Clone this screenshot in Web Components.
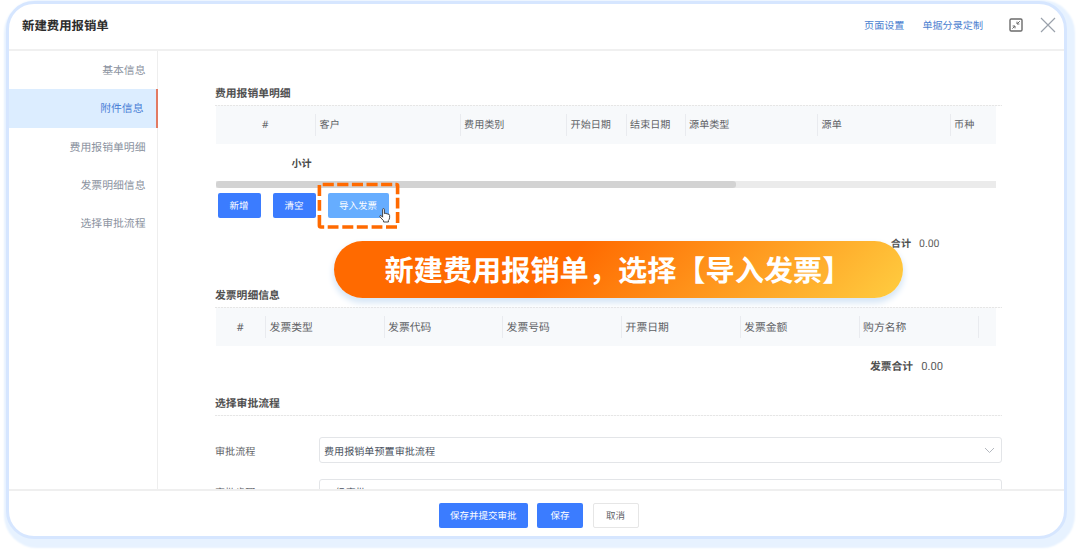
<!DOCTYPE html>
<html lang="zh-CN">
<head>
<meta charset="utf-8">
<title>新建费用报销单</title>
<style>
  html, body {
    margin: 0;
    height: 552px;
    overflow: hidden;
    background: #ffffff;
  }

  body {
    font-family: 'Noto Sans', 'Noto Sans CJK SC', sans-serif;
    text-rendering: geometricPrecision;
    position: relative;
  }
</style>
</head>
<body>

<mx-window label="新建费用报销单">
  <mx-link slot="tools">页面设置</mx-link>
  <mx-link slot="tools">单据分录定制</mx-link>
  <mx-icon slot="tools" name="shrink" style="margin: 0 0 0 8px"></mx-icon>
  <mx-icon slot="tools" name="close" style="margin: 0 0 0 -1px"></mx-icon>

  <mx-nav-item slot="nav">基本信息</mx-nav-item>
  <mx-nav-item slot="nav" selected>附件信息</mx-nav-item>
  <mx-nav-item slot="nav">费用报销单明细</mx-nav-item>
  <mx-nav-item slot="nav">发票明细信息</mx-nav-item>
  <mx-nav-item slot="nav">选择审批流程</mx-nav-item>

  <mx-section label="费用报销单明细" style="height: 202px">
    <mx-columns columns="#:99.5,客户:144.5,费用类别:106.5,开始日期:59.5,结束日期:59,源单类型:132.5,源单:132.5,币种:46"></mx-columns>
    <mx-subtotal>小计</mx-subtotal>
    <mx-scroll></mx-scroll>
    <mx-toolbar>
      <mx-button style="width: 43px">新增</mx-button>
      <mx-button style="width: 43px">清空</mx-button>
      <mx-button kind="hover" style="width: 61px">导入发票</mx-button>
    </mx-toolbar>
    <mx-total label="合计" style="margin: 16px 62.5px 0 0">0.00</mx-total>
  </mx-section>

  <mx-section label="发票明细信息" style="height: 108px">
    <mx-columns size="large" columns="#:49.5,发票类型:118.5,发票代码:118.5,发票号码:119,开票日期:118.5,发票金额:119,购方名称:119,:18"></mx-columns>
    <mx-total label="发票合计" size="large" style="margin: 11px 59px 0 0">0.00</mx-total>
  </mx-section>

  <mx-section label="选择审批流程">
    <mx-field label="审批流程" arrow style="margin-top: 21px">费用报销单预置审批流程</mx-field>
    <mx-field label="审批步骤" style="margin-top: 16px; line-height: 13px"><span style="padding-left: 1.5px">一级审批</span></mx-field>
  </mx-section>

  <mx-button slot="footer" style="width: 88.5px">保存并提交审批</mx-button>
  <mx-button slot="footer" style="width: 46px">保存</mx-button>
  <mx-button slot="footer" kind="plain" style="width: 46px">取消</mx-button>
</mx-window>

<mx-marker></mx-marker>
<mx-banner>新建费用报销单，选择【导入发票】</mx-banner>

<script>
function build( host, html ) {
  const template = document.createElement( 'template' );
  template.innerHTML = html;
  const shadowRoot = host.attachShadow( {mode: 'open'} );
  shadowRoot.appendChild( template.content.cloneNode( true ) );
  return shadowRoot;
}

class Window extends HTMLElement {
  constructor() {
    super();

    const root = build( this, `
      <style>
        :host {
          box-sizing: border-box;
          display: flex;
          flex-direction: column;
          position: absolute;
          left: 6px;
          top: 1px;
          width: 1061px;
          height: 538px;
          background: #ffffff;
          border: solid 3px #d6e6ff;
          border-radius: 28px;
          box-shadow: 3px 4px 2px 5px #e7f2ff;
          overflow: hidden;
        }

        header {
          align-items: center;
          border-bottom: solid 2px #f0f0f0;
          box-sizing: border-box;
          display: flex;
          flex: none;
          gap: 18px;
          height: 47px;
          padding: 0 8px 3px 13px;
        }

        h1 {
          color: #2b2b2b;
          flex: 1;
          font-size: 12.4px;
          font-weight: 700;
          line-height: 18px;
          margin: 0;
          padding-top: 2px;
        }

        .middle {
          display: flex;
          flex: 1;
          min-height: 0;
        }

        nav {
          border-right: solid 1px #eeeeee;
          box-sizing: border-box;
          flex: none;
          width: 149px;
        }

        main {
          box-sizing: border-box;
          flex: 1;
          overflow: hidden;
          padding: 34.5px 62px 0 57.5px;
        }

        footer {
          border-top: solid 2px #efefef;
          box-sizing: border-box;
          display: flex;
          flex: none;
          gap: 9.5px;
          height: 47px;
          padding: 12px 0 0 430px;
        }
      </style>
      <header><h1></h1><slot name="tools"></slot></header>
      <div class="middle">
        <nav><slot name="nav"></slot></nav>
        <main><slot></slot></main>
      </div>
      <footer><slot name="footer"></slot></footer>
    ` );

    root.querySelector( 'h1' ).innerText = this.getAttribute( 'label' );
  }
}

class Link extends HTMLElement {
  constructor() {
    super();

    build( this, `
      <style>
        :host {
          color: #4c7fd0;
          display: block;
          font-size: 10.1px;
          line-height: 16px;
          white-space: nowrap;
        }
      </style>
      <slot></slot>
    ` );
  }
}

class Icon extends HTMLElement {
  constructor() {
    super();

    const icons = {
      shrink: `
        <svg width="14" height="14" viewBox="0 0 14 14" fill="none" stroke="#6b6b6b">
          <rect x="1" y="1" width="12" height="12" rx="1.2" stroke-width="1.4"/>
          <path d="M10.8 3.2L8.2 5.8M8 3.6V6h2.4M3.4 10.6L5.8 8.2M3.6 8H6v2.4" stroke-width="1"/>
        </svg>`,
      close: `
        <svg width="16" height="16" viewBox="0 0 16 16" fill="none" stroke="#9aa1ab">
          <path d="M1 1L15 15M15 1L1 15" stroke-width="1.2"/>
        </svg>`
    };

    build( this, `
      <style>
        :host {
          display: block;
        }

        svg {
          display: block;
        }
      </style>
      ${icons[this.getAttribute( 'name' )]}
    ` );
  }
}

class NavItem extends HTMLElement {
  constructor() {
    super();

    build( this, `
      <style>
        :host {
          box-sizing: border-box;
          color: #8b92a0;
          display: block;
          font-size: 10.85px;
          height: 38.3px;
          line-height: 39px;
          padding-right: 11.5px;
          text-align: right;
        }

        :host( [selected] ) {
          background: #dcedff;
          border-right: solid 2px #e27a62;
          color: #4b80d6;
          margin-right: -1px;
          padding-right: 12.5px;
        }
      </style>
      <slot></slot>
    ` );
  }
}

class Section extends HTMLElement {
  constructor() {
    super();

    const root = build( this, `
      <style>
        :host {
          display: block;
        }

        h2 {
          background: repeating-linear-gradient( 90deg, #e6e6e6 0 2px, #f8f8f8 2px 3px ) bottom / 100% 1px no-repeat;
          box-sizing: border-box;
          color: #505050;
          font-size: 10.8px;
          font-weight: 700;
          height: 20.5px;
          line-height: 16px;
          margin: 0 0 0 -0.5px;
        }
      </style>
      <h2></h2>
      <slot></slot>
    ` );

    root.querySelector( 'h2' ).innerText = this.getAttribute( 'label' );
  }
}

class Columns extends HTMLElement {
  constructor() {
    super();

    const root = build( this, `
      <style>
        :host {
          align-items: center;
          background: #f7f9fb;
          color: #606266;
          display: flex;
          font-size: 10.1px;
          height: 37.5px;
          width: 780.5px;
        }

        :host( [size=large] ) {
          font-size: 10.8px;
        }

        div {
          border-left: solid 1px #e9ebef;
          box-sizing: border-box;
          flex: none;
          height: 22px;
          line-height: 21.5px;
          padding-left: 3.6px;
          white-space: nowrap;
        }

        :host( [size=large] ) div {
          line-height: 24px;
        }

        div:first-of-type {
          border: none;
          padding: 0;
          text-align: center;
        }
      </style>
    ` );

    for( const column of this.getAttribute( 'columns' ).split( ',' ) ) {
      const [text, width] = column.split( ':' );
      const cell = document.createElement( 'div' );
      cell.style.width = `${width}px`;
      cell.innerText = text;
      root.appendChild( cell );
    }
  }
}

class Subtotal extends HTMLElement {
  constructor() {
    super();

    build( this, `
      <style>
        :host {
          color: #4a4a4a;
          display: block;
          font-size: 10.1px;
          font-weight: 700;
          height: 37.5px;
          line-height: 39px;
          padding-left: 76px;
        }
      </style>
      <slot></slot>
    ` );
  }
}

class Scroll extends HTMLElement {
  constructor() {
    super();

    build( this, `
      <style>
        :host {
          background: #ebebeb;
          display: block;
          height: 6.5px;
          width: 780.5px;
        }

        div {
          background: #d3d3d3;
          border-radius: 3px;
          height: 100%;
          width: 520.5px;
        }
      </style>
      <div></div>
    ` );
  }
}

class Toolbar extends HTMLElement {
  constructor() {
    super();

    build( this, `
      <style>
        :host {
          display: flex;
          gap: 12px;
          padding: 5.5px 0 0 2px;
        }
      </style>
      <slot></slot>
    ` );
  }
}

class Button extends HTMLElement {
  constructor() {
    super();

    build( this, `
      <style>
        :host {
          display: block;
          height: 25px;
        }

        button {
          background: #3b7cff;
          border: none;
          border-radius: 2px;
          box-sizing: border-box;
          color: #ffffff;
          display: block;
          font-family: inherit;
          font-size: 9.5px;
          height: 25px;
          line-height: 24px;
          padding: 1px 0 0;
          text-rendering: inherit;
          white-space: nowrap;
          width: 100%;
        }

        :host( [kind=hover] ) button {
          background: #66adff;
        }

        :host( [kind=plain] ) button {
          background: #ffffff;
          border: solid 1px #e6e6e6;
          color: #606266;
          line-height: 22px;
        }
      </style>
      <button type="button"><slot></slot></button>
    ` );
  }
}

class Total extends HTMLElement {
  constructor() {
    super();

    const root = build( this, `
      <style>
        :host {
          color: #5c5c5c;
          display: flex;
          font-size: 10.1px;
          gap: 8px;
          justify-content: flex-end;
          line-height: 19px;
        }

        :host( [size=large] ) {
          font-size: 10.8px;
          line-height: 20px;
        }

        b {
          color: #505050;
        }

        span {
          font-family: Roboto, sans-serif;
          font-size: 1.04em;
        }
      </style>
      <b></b>
      <span><slot></slot></span>
    ` );

    root.querySelector( 'b' ).innerText = this.getAttribute( 'label' );
  }
}

class Field extends HTMLElement {
  constructor() {
    super();

    const root = build( this, `
      <style>
        :host {
          align-items: center;
          color: #606266;
          display: flex;
          font-size: 10.1px;
          height: 26px;
        }

        label {
          flex: none;
          margin-left: -0.5px;
          width: 104px;
        }

        div {
          align-items: center;
          border: solid 1px #e3e5e8;
          border-radius: 3px;
          box-sizing: border-box;
          color: #4a5260;
          display: flex;
          flex: 1;
          height: 26px;
          justify-content: space-between;
          padding: 0 6px 0 4px;
        }

        svg {
          display: none;
        }

        :host( [arrow] ) svg {
          display: block;
        }
      </style>
      <label></label>
      <div>
        <span><slot></slot></span>
        <svg width="11" height="7" viewBox="0 0 11 7" fill="none" stroke="#b4b8bf">
          <path d="M1 1L5.5 5.5L10 1"/>
        </svg>
      </div>
    ` );

    root.querySelector( 'label' ).innerText = this.getAttribute( 'label' );
  }
}

// Dashed frame and hand pointer over the import button
class Marker extends HTMLElement {
  constructor() {
    super();

    build( this, `
      <style>
        :host {
          display: block;
          left: 317px;
          position: absolute;
          top: 182px;
        }

        svg {
          display: block;
        }

        .hand {
          left: 62px;
          position: absolute;
          top: 26px;
        }
      </style>
      <svg width="84" height="48" viewBox="0 0 84 48" fill="none" stroke="#ff6a00" stroke-width="3.6">
        <path d="M5.7 2.5H16.8M20.2 2.5H31.4M34.9 2.5H46M49.5 2.5H60.6M64.1 2.5H75.2"/>
        <path d="M2.4 3V14M2.4 18V28.7M2.4 33V43.5Q2.4 45 4 45H7.2"/>
        <path d="M10.7 45H21.5M25.3 45H36.3M39.8 45H50.8M54.6 45H65.4M69 45H80"/>
        <path d="M78.4 2.5H79.4Q80.6 2.5 80.6 4V12.2M80.6 15.8V26.4M80.6 30V41"/>
      </svg>
      <svg class="hand" width="12" height="15" viewBox="0 0 12 15" fill="#ffffff" stroke="#333333" stroke-width="0.9" stroke-linejoin="round">
        <path d="M3.6 9.2V1.6Q3.6 0.6 4.5 0.6T5.4 1.6V5.6Q6.2 4.9 7.1 5.7Q8 5.2 8.8 6.1Q10.6 5.9 10.6 7.5V9.8Q10.4 11.6 9.4 12.4V14H4.6V12.8L1 8.9Q0.4 8 1.2 7.5T2.6 8Z"/>
      </svg>
    ` );
  }
}

class Banner extends HTMLElement {
  constructor() {
    super();

    build( this, `
      <style>
        :host {
          background: linear-gradient( 135deg, #ff6a00 40%, #ffc83d 97% );
          border-radius: 29px;
          box-shadow: 0 4px 6px 1px #d6e6f6;
          box-sizing: border-box;
          color: #ffffff;
          display: block;
          font-size: 29.2px;
          font-weight: 700;
          height: 57px;
          left: 334px;
          line-height: 58px;
          padding-left: 50.5px;
          position: absolute;
          top: 241px;
          white-space: nowrap;
          width: 569px;
        }
      </style>
      <slot></slot>
    ` );
  }
}

window.customElements.define( 'mx-window', Window );
window.customElements.define( 'mx-link', Link );
window.customElements.define( 'mx-icon', Icon );
window.customElements.define( 'mx-nav-item', NavItem );
window.customElements.define( 'mx-section', Section );
window.customElements.define( 'mx-columns', Columns );
window.customElements.define( 'mx-subtotal', Subtotal );
window.customElements.define( 'mx-scroll', Scroll );
window.customElements.define( 'mx-toolbar', Toolbar );
window.customElements.define( 'mx-button', Button );
window.customElements.define( 'mx-total', Total );
window.customElements.define( 'mx-field', Field );
window.customElements.define( 'mx-marker', Marker );
window.customElements.define( 'mx-banner', Banner );
</script>
</body>
</html>
